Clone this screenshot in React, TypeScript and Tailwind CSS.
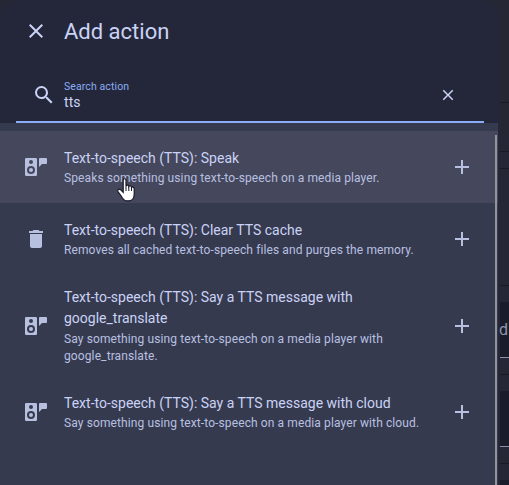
import React from 'react';

type IconProps = { d: string; className?: string };

const Icon = ({ d, className = 'size-6' }: IconProps) => (
  <svg viewBox="0 0 24 24" className={`shrink-0 ${className}`} fill="currentColor" fillRule="evenodd">
    <path d={d} />
  </svg>
);

const closePath =
  'M19 6.41L17.59 5L12 10.59L6.41 5L5 6.41L10.59 12L5 17.59L6.41 19L12 13.41L17.59 19L19 17.59L13.41 12L19 6.41Z';
const searchPath =
  'M9.5 3A6.5 6.5 0 0 1 16 9.5C16 11.11 15.41 12.59 14.44 13.73L14.71 14H15.5L20.5 19L19 20.5L14 15.5V14.71L13.73 14.44C12.59 15.41 11.11 16 9.5 16A6.5 6.5 0 0 1 3 9.5A6.5 6.5 0 0 1 9.5 3M9.5 5C7 5 5 7 5 9.5C5 12 7 14 9.5 14C12 14 14 12 14 9.5C14 7 12 5 9.5 5Z';
const plusPath = 'M19 13H13V19H11V13H5V11H11V5H13V11H19V13Z';
const deletePath =
  'M19 4H15.5L14.5 3H9.5L8.5 4H5V6H19M6 19A2 2 0 0 0 8 21H16A2 2 0 0 0 18 19V7H6V19Z';
const speakerPath =
  'M2.2 3H11.8A1.2 1.2 0 0 1 13 4.2V19.8A1.2 1.2 0 0 1 11.8 21H2.2A1.2 1.2 0 0 1 1 19.8V4.2A1.2 1.2 0 0 1 2.2 3ZM7 5A2 2 0 1 0 7 9A2 2 0 1 0 7 5ZM7 11A4 4 0 1 0 7 19A4 4 0 1 0 7 11ZM7 13A2 2 0 1 1 7 17A2 2 0 1 1 7 13ZM16 3H22A1 1 0 0 1 23 4V8A1 1 0 0 1 22 9H18L15 12V4A1 1 0 0 1 16 3Z';

type Action = {
  icon: string;
  title: string;
  description: string;
  row: string;
  text?: string;
};

const actions: Action[] = [
  {
    icon: speakerPath,
    title: 'Text-to-speech (TTS): Speak',
    description: 'Speaks something using text-to-speech on a media player.',
    row: 'h-[72px] bg-[#45475c]',
  },
  {
    icon: deletePath,
    title: 'Text-to-speech (TTS): Clear TTS cache',
    description: 'Removes all cached text-to-speech files and purges the memory.',
    row: 'h-[72px]',
  },
  {
    icon: speakerPath,
    title: 'Text-to-speech (TTS): Say a TTS message with google_translate',
    description: 'Say something using text-to-speech on a media player with google_translate.',
    row: 'h-[101px]',
    text: 'gap-px pt-px',
  },
  {
    icon: speakerPath,
    title: 'Text-to-speech (TTS): Say a TTS message with cloud',
    description: 'Say something using text-to-speech on a media player with cloud.',
    row: 'h-[72px]',
  },
];

const ActionRow = ({ icon, title, description, row, text = '' }: Action) => (
  <li className={`flex items-center pl-6 pr-6 text-[#b8c0e0] ${row}`}>
    <Icon d={icon} />
    <div className={`ml-4 flex w-[366px] shrink-0 flex-col ${text}`}>
      <div className="text-[14px] leading-[21px] text-[#cad3f5]">{title}</div>
      <div className="pt-px text-[12px] leading-[17px] tracking-[0.11px]">{description}</div>
    </div>
    <Icon d={plusPath} className="ml-5 size-6" />
  </li>
);

const Cursor = () => (
  <svg viewBox="0 0 20 26" className="absolute left-[116px] top-[177px] h-[26px] w-5">
    <path
      d="M7.2 13V3.6C7.2 1.1 10 1.1 10 3.6V9C10.5 7.6 12.7 7.8 12.8 9.4C13.4 8.3 15.4 8.7 15.5 10.3C16.4 9.5 18.2 10.1 18.2 12V17C18.2 20.2 16.5 23.5 13.4 23.8H10.3C7.8 23.8 6.5 21.5 5.2 19L2.1 14.9C0.8 12.7 3.1 11.2 4.7 12.8L7.2 15.3Z"
      fill="white"
      stroke="#181926"
      strokeWidth="1.2"
    />
    <path d="M10 9V14M12.8 9.5V14M15.5 10.5V14" stroke="#181926" strokeWidth="1" />
  </svg>
);

const Field = ({ label = '' }: { label?: string }) => (
  <div className="h-14 shrink-0 border-b border-[#8b91ac] bg-[#1a1c29] pt-[18px] text-[16px] leading-5 text-[#8f95b0]">
    <span className="-ml-px">{label}</span>
  </div>
);

const Backdrop = () => (
  <div className="flex h-full w-[9px] shrink-0 flex-col bg-[#252735]">
    <div className="h-[103px] shrink-0 border-b border-[#181a26]" />
    <div className="h-[49px] shrink-0 border-b border-[#181a26]" />
    <div className="h-[17px] shrink-0 border-b border-[#181a26]" />
    <div className="h-[117px] shrink-0 border-b border-[#181a26]" />
    <div className="h-4 shrink-0" />
    <Field label="d" />
    <div className="h-[17px] shrink-0 border-b border-[#181a26]" />
    <div className="h-4 shrink-0" />
    <Field />
    <div className="h-[17px] shrink-0 border-b border-[#181a26]" />
    <div className="h-4 shrink-0" />
    <Field />
  </div>
);

export default function App() {
  return (
    <div className="relative flex h-[485px] w-[509px] overflow-hidden bg-[#252735] font-[Roboto,sans-serif]">
      <section className="flex w-[500px] shrink-0 flex-col rounded-t-[20px] bg-[#24273a]">
        <header className="flex h-[62px] shrink-0 items-center pl-6 text-[#cad3f5]">
          <Icon d={closePath} />
          <h1 className="ml-4 pt-0.5 text-[22px] leading-7">Add action</h1>
        </header>
        <div className="mx-4 flex h-[61px] w-[468px] shrink-0 items-center border-b-2 border-[#8aadf4] pl-4 text-[#cad3f5]">
          <Icon d={searchPath} className="mt-[7px] size-6" />
          <label className="ml-2 flex h-full w-[370px] flex-col pt-[18px]">
            <span className="text-[10.5px] leading-[14px] tracking-[0.1px] text-[#8aadf4]">Search action</span>
            <span className="-mt-px text-[14px] leading-[18px] tracking-[0.1px]">tts</span>
          </label>
          <Icon d={closePath} className="ml-[5px] mt-[7px] size-[18px]" />
        </div>
        <div className="flex min-h-0 w-[498px] flex-1 bg-[#363a4f]">
          <ul className="flex w-[495px] shrink-0 flex-col pt-2">
            {actions.map((a) => (
              <ActionRow key={a.title} {...a} />
            ))}
          </ul>
          <div className="flex flex-1 flex-col pt-2">
            <div className="flex h-[72px] bg-[#45475c]">
              <div className="mt-1 w-0.5 bg-[#949494]" />
            </div>
            <div className="w-0.5 flex-1 bg-[#949494]" />
          </div>
        </div>
      </section>
      <Backdrop />
      <Cursor />
    </div>
  );
}
